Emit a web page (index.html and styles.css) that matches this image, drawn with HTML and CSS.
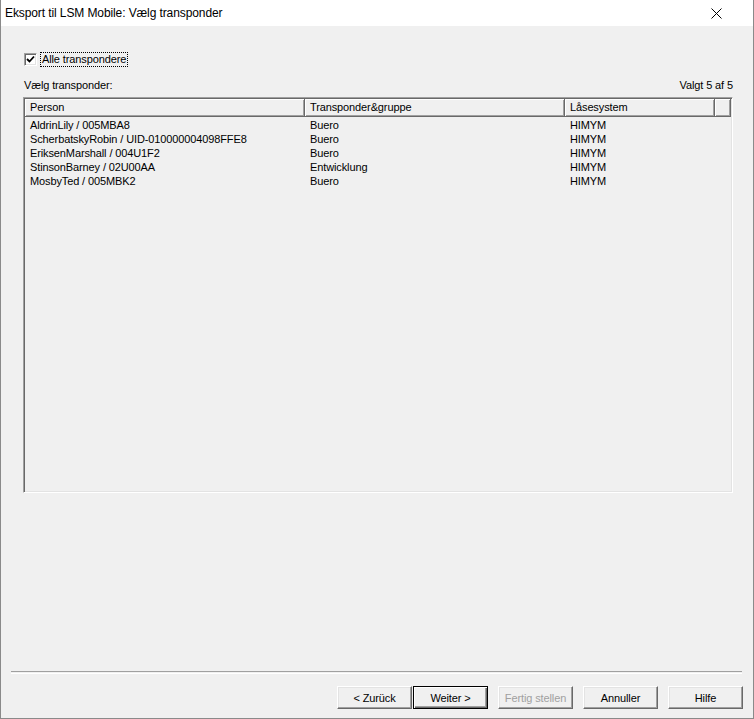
FILE: index.html
```html
<!DOCTYPE html>
<html lang="da">
<head>
<meta charset="utf-8">
<title>Eksport til LSM Mobile</title>
<link rel="stylesheet" href="styles.css">
</head>
<body>
<div class="window">
  <div class="titlebar">
    <span class="title">Eksport til LSM Mobile: Vælg transponder</span>
    <span class="close">
      <svg width="11" height="11" viewBox="0 0 11 11"><path d="M0.5 0.5 L10.5 10.5 M10.5 0.5 L0.5 10.5" stroke="#000" stroke-width="1" fill="none"/></svg>
    </span>
  </div>
  <div class="content">
    <div class="check-row">
      <span class="checkbox">
        <svg width="9" height="9" viewBox="0 0 9 9"><path d="M1 4 L3.5 6.5 L8 1.5" stroke="#000" stroke-width="1.8" fill="none"/></svg>
      </span>
      <span class="check-label">Alle transpondere</span>
    </div>
    <div class="label-row">
      <span>Vælg transponder:</span>
      <span>Valgt 5 af 5</span>
    </div>
    <div class="listview">
      <div class="lv-header">
        <div class="hcell c1">Person</div>
        <div class="hcell c2">Transponder&amp;gruppe</div>
        <div class="hcell c3">Låsesystem</div>
        <div class="hcell c4"></div>
      </div>
      <div class="lv-body">
        <div class="lv-row"><span class="cell c1">AldrinLily / 005MBA8</span><span class="cell c2">Buero</span><span class="cell c3">HIMYM</span></div>
        <div class="lv-row"><span class="cell c1">ScherbatskyRobin / UID-010000004098FFE8</span><span class="cell c2">Buero</span><span class="cell c3">HIMYM</span></div>
        <div class="lv-row"><span class="cell c1">EriksenMarshall / 004U1F2</span><span class="cell c2">Buero</span><span class="cell c3">HIMYM</span></div>
        <div class="lv-row"><span class="cell c1">StinsonBarney / 02U00AA</span><span class="cell c2">Entwicklung</span><span class="cell c3">HIMYM</span></div>
        <div class="lv-row"><span class="cell c1">MosbyTed / 005MBK2</span><span class="cell c2">Buero</span><span class="cell c3">HIMYM</span></div>
      </div>
    </div>
  </div>
  <div class="separator"></div>
  <div class="buttons">
    <button class="btn pair">&lt; Zurück</button>
    <button class="btn default">Weiter &gt;</button>
    <button class="btn" disabled>Fertig stellen</button>
    <button class="btn">Annuller</button>
    <button class="btn">Hilfe</button>
  </div>
</div>
</body>
</html>
```

FILE: styles.css
```css
html, body {
  margin: 0;
  padding: 0;
}
body {
  width: 754px;
  height: 719px;
  background: #f0f0f0;
  font-family: "Liberation Sans", Arial, sans-serif;
  font-size: 11px;
  letter-spacing: -0.12px;
  color: #000;
  overflow: hidden;
}
.window {
  box-sizing: border-box;
  width: 754px;
  height: 719px;
  border: 1px solid #8a8a8a;
  border-top: none;
  background: #f0f0f0;
  display: flex;
  flex-direction: column;
}
.titlebar {
  height: 26px;
  background: #fff;
  display: flex;
  align-items: center;
  justify-content: space-between;
  padding: 0 31px 0 4px;
  font-family: "Liberation Sans", Arial, sans-serif;
  font-size: 12px;
  letter-spacing: -0.1px;
}
.close {
  display: flex;
  align-items: center;
}
.content {
  padding: 25px 20px 0 22px;
}
.check-row {
  display: flex;
  align-items: center;
  height: 16px;
}
.checkbox {
  box-sizing: border-box;
  width: 13px;
  height: 13px;
  margin-left: 1px;
  background: #fff;
  border-top: 1px solid #a0a0a0;
  border-left: 1px solid #a0a0a0;
  border-right: 1px solid #fff;
  border-bottom: 1px solid #fff;
  box-shadow: inset 1px 1px 0 #696969, inset -1px -1px 0 #e3e3e3;
  display: flex;
  align-items: center;
  justify-content: center;
}
.check-label {
  margin-left: 4px;
  padding: 0 1px;
  line-height: 13px;
  outline: 1px dotted #000;
}
.label-row {
  margin-top: 11px;
  display: flex;
  justify-content: space-between;
  height: 14px;
  line-height: 14px;
  padding-left: 1px;
}
.listview {
  box-sizing: border-box;
  margin-top: 5px;
  height: 396px;
  border-top: 1px solid #a0a0a0;
  border-left: 1px solid #a0a0a0;
  border-right: 1px solid #fff;
  border-bottom: 1px solid #fff;
  box-shadow: inset 1px 1px 0 #696969, inset -1px -1px 0 #e3e3e3;
  padding: 1px;
}
.lv-header {
  display: flex;
  height: 18px;
}
.hcell {
  box-sizing: border-box;
  height: 18px;
  line-height: 17px;
  padding-left: 5px;
  background: #f0f0f0;
  border-right: 1px solid #696969;
  border-bottom: 1px solid #696969;
  box-shadow: inset 1px 1px 0 #fff, inset -1px -1px 0 #a0a0a0;
}
.c1 { width: 280px; }
.c2 { width: 260px; }
.c3 { width: 150px; }
.hcell.c4 { width: 16px; }
.lv-body {
  padding-top: 1px;
}
.lv-row {
  display: flex;
  height: 14px;
  line-height: 14px;
}
.cell {
  box-sizing: border-box;
  padding-left: 5px;
  white-space: nowrap;
}
.separator {
  margin: 178px 11px 0 10px;
  height: 1px;
  border-top: 1px solid #a0a0a0;
  border-bottom: 1px solid #fff;
}
.buttons {
  display: flex;
  justify-content: flex-end;
  padding: 12px 10px 0 0;
}
.btn {
  box-sizing: border-box;
  width: 75px;
  height: 23px;
  margin-left: 10px;
  font-family: "Liberation Sans", Arial, sans-serif;
  font-size: 11px;
  letter-spacing: -0.12px;
  color: #000;
  background: #f0f0f0;
  border-top: 1px solid #fff;
  border-left: 1px solid #fff;
  border-right: 1px solid #696969;
  border-bottom: 1px solid #696969;
  box-shadow: inset -1px -1px 0 #a0a0a0, inset 1px 1px 0 #e3e3e3;
  padding: 0;
}
.btn.pair {
  margin-left: 0;
}
.btn.default {
  margin-left: 1px;
  border: 1px solid #000;
  box-shadow: inset 1px 1px 0 #fff, inset -1px -1px 0 #696969, inset -2px -2px 0 #a0a0a0;
}
.btn:disabled {
  color: #a0a0a0;
}
```
